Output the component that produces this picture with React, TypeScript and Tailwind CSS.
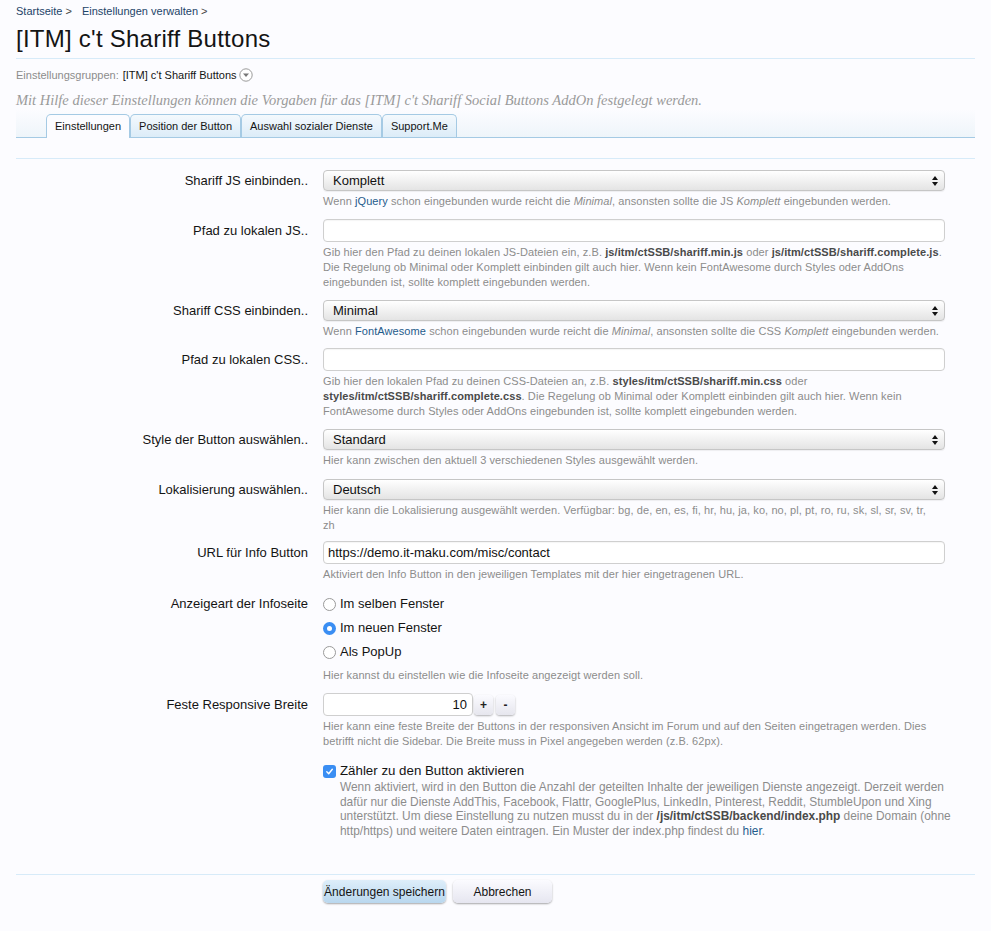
import React from "react";

const Arrows = () => (
  <svg width="8" height="12" viewBox="0 0 8 12" className="absolute right-[5px] top-1/2 -translate-y-1/2">
    <path d="M4 1 L7 5 L1 5 Z" fill="#111" />
    <path d="M4 11 L7 7 L1 7 Z" fill="#111" />
  </svg>
);

const Select = ({ value }: { value: string }) => (
  <div className="relative h-[21px] rounded-[4px] border border-[#c6c6c6] bg-gradient-to-b from-[#ffffff] to-[#e4e4e4] pl-[9px] text-[13px] leading-[19px] text-[#111] shadow-[0_1px_1px_rgba(0,0,0,0.06)]">
    {value}
    <Arrows />
  </div>
);

const Input = ({ value }: { value?: string }) => (
  <div className="h-[23px] rounded-[4px] border border-[#cfcfcf] bg-white px-[4px] text-[13px] leading-[21px] text-[#111] shadow-[inset_0_1px_1px_rgba(0,0,0,0.04)]">
    {value}
  </div>
);

const Hint = ({ children, className = "mt-[3px] text-[11px] leading-[15px] tracking-[0.08px]" }: { children: React.ReactNode; className?: string }) => (
  <div className={"text-[#8c8c8c] " + className}>{children}</div>
);

const B = ({ children }: { children: React.ReactNode }) => (
  <span className="font-bold text-[#4a4a4a]">{children}</span>
);
const A = ({ children }: { children: React.ReactNode }) => (
  <span className="text-[#1f5b8c]">{children}</span>
);

const Row = ({ label, children, labelH = 22, mb = 10 }: { label?: string; children: React.ReactNode; labelH?: number; mb?: number }) => (
  <div className="flex" style={{ marginBottom: `${mb}px` }}>
    <div
      className="w-[292px] shrink-0 text-right text-[13px] text-[#141414]"
      style={{ lineHeight: `${labelH}px` }}
    >
      {label}
    </div>
    <div className="ml-[15px] mr-[30px] flex-1">{children}</div>
  </div>
);

const Radio = ({ checked, label }: { checked?: boolean; label: string }) => (
  <div className="flex h-[24px] items-center">
    {checked ? (
      <span className="flex h-[13px] w-[13px] items-center justify-center rounded-full bg-[#3a8ef3]">
        <span className="h-[5px] w-[5px] rounded-full bg-white" />
      </span>
    ) : (
      <span className="h-[13px] w-[13px] rounded-full border border-[#9a9a9a] bg-white" />
    )}
    <span className="ml-[4px] text-[13px] text-[#141414]">{label}</span>
  </div>
);

const Tab = ({ label, active }: { label: string; active?: boolean }) => (
  <div
    className={
      active
        ? "relative -mb-px flex h-[24px] items-center rounded-t-[5px] border border-b-0 border-[#a5cae4] bg-[#fcfcff] px-[8px] text-[11px] text-[#141414]"
        : "flex h-[23px] items-center rounded-t-[5px] border border-b-0 border-[#a5cae4] bg-gradient-to-b from-[#f4f9fd] to-[#dcecf8] px-[8px] text-[11px] text-[#141414]"
    }
  >
    {label}
  </div>
);

export default function App() {
  return (
    <div className="min-h-[931px] bg-[#fcfcff] font-['Liberation_Sans',Arial,sans-serif]">
      <div className="px-4">
        <div className="h-[22px] text-[11px] leading-[22px] text-[#1d4468]">
          <span>Startseite</span>
          <span className="ml-[3px] text-[#444]">&gt;</span>
          <span className="ml-[10px]">Einstellungen verwalten</span>
          <span className="ml-[3px] text-[#444]">&gt;</span>
        </div>
        <div className="h-[37px] border-b border-[#d7ebf9] text-[24px] leading-[34px] tracking-[0.25px] text-[#141414]">
          [ITM] c't Shariff Buttons
        </div>
        <div className="mt-[8px] flex items-center text-[11px] leading-[16px]">
          <span className="text-[#8c8c8c]">Einstellungsgruppen:</span>
          <span className="ml-[4px] text-[#141414]">[ITM] c't Shariff Buttons</span>
          <svg width="14" height="14" viewBox="0 0 14 14" className="ml-[2px]">
            <circle cx="7" cy="7" r="6.2" fill="#fff" stroke="#9a9a9a" strokeWidth="1" />
            <path d="M4 5.5 L10 5.5 L7 9 Z" fill="#777" />
          </svg>
        </div>
        <div className="mt-[8px] font-['Liberation_Serif',serif] text-[14.5px] italic leading-[18px] text-[#9a9a9a]">
          Mit Hilfe dieser Einstellungen können die Vorgaben für das [ITM] c't Shariff Social Buttons AddOn festgelegt werden.
        </div>
        <div className="flex h-[29px] items-end border-b border-[#a5cae4] bg-gradient-to-b from-[#fcfcff] to-[#eef5fa] pl-[30px]">
          <Tab label="Einstellungen" active />
          <Tab label="Position der Button" />
          <Tab label="Auswahl sozialer Dienste" />
          <Tab label="Support.Me" />
        </div>
        <div className="mt-[20px] border-t border-[#d7ebf9] pt-[11px]">
          <Row label="Shariff JS einbinden.." labelH={21}>
            <Select value="Komplett" />
            <Hint>
              Wenn <A>jQuery</A> schon eingebunden wurde reicht die <i>Minimal</i>, ansonsten sollte die JS <i>Komplett</i> eingebunden werden.
            </Hint>
          </Row>
          <Row label="Pfad zu lokalen JS.." labelH={23}>
            <Input />
            <Hint>
              Gib hier den Pfad zu deinen lokalen JS-Dateien ein, z.B. <B>js/itm/ctSSB/shariff.min.js</B> oder <B>js/itm/ctSSB/shariff.complete.js</B>.
              <br />
              Die Regelung ob Minimal oder Komplett einbinden gilt auch hier. Wenn kein FontAwesome durch Styles oder AddOns
              <br />
              eingebunden ist, sollte komplett eingebunden werden.
            </Hint>
          </Row>
          <Row label="Shariff CSS einbinden.." labelH={21} mb={9}>
            <Select value="Minimal" />
            <Hint>
              Wenn <A>FontAwesome</A> schon eingebunden wurde reicht die <i>Minimal</i>, ansonsten sollte die CSS <i>Komplett</i> eingebunden werden.
            </Hint>
          </Row>
          <Row label="Pfad zu lokalen CSS.." labelH={23}>
            <Input />
            <Hint>
              Gib hier den lokalen Pfad zu deinen CSS-Dateien an, z.B. <B>styles/itm/ctSSB/shariff.min.css</B> oder
              <br />
              <B>styles/itm/ctSSB/shariff.complete.css</B>. Die Regelung ob Minimal oder Komplett einbinden gilt auch hier. Wenn kein
              <br />
              FontAwesome durch Styles oder AddOns eingebunden ist, sollte komplett eingebunden werden.
            </Hint>
          </Row>
          <Row label="Style der Button auswählen.." labelH={21} mb={11}>
            <Select value="Standard" />
            <Hint>Hier kann zwischen den aktuell 3 verschiedenen Styles ausgewählt werden.</Hint>
          </Row>
          <Row label="Lokalisierung auswählen.." labelH={21} mb={8}>
            <Select value="Deutsch" />
            <Hint>
              Hier kann die Lokalisierung ausgewählt werden. Verfügbar: bg, de, en, es, fi, hr, hu, ja, ko, no, pl, pt, ro, ru, sk, sl, sr, sv, tr,
              <br />
              zh
            </Hint>
          </Row>
          <Row label="URL für Info Button" labelH={23} mb={10}>
            <Input value="https://demo.it-maku.com/misc/contact" />
            <Hint>Aktiviert den Info Button in den jeweiligen Templates mit der hier eingetragenen URL.</Hint>
          </Row>
          <Row label="Anzeigeart der Infoseite" labelH={24} mb={10}>
            <Radio label="Im selben Fenster" />
            <Radio label="Im neuen Fenster" checked />
            <Radio label="Als PopUp" />
            <Hint className="mt-[4px] text-[11px] leading-[15px] tracking-[0.08px]">
              Hier kannst du einstellen wie die Infoseite angezeigt werden soll.
            </Hint>
          </Row>
          <Row label="Feste Responsive Breite" labelH={23}>
            <div className="flex items-center">
              <div className="h-[23px] w-[150px] rounded-[4px] border border-[#cfcfcf] bg-white px-[5px] text-right text-[13px] leading-[21px] text-[#111]">
                10
              </div>
              <div className="ml-[1px] flex h-[20px] w-[19px] items-center justify-center rounded-[4px] bg-gradient-to-b from-[#fbfbff] to-[#e6e6ee] text-[12px] font-bold text-[#222] shadow-[0_1px_2px_rgba(0,0,0,0.3)]">
                +
              </div>
              <div className="ml-[3px] flex h-[20px] w-[19px] items-center justify-center rounded-[4px] bg-gradient-to-b from-[#fbfbff] to-[#e6e6ee] text-[12px] font-bold text-[#222] shadow-[0_1px_2px_rgba(0,0,0,0.3)]">
                -
              </div>
            </div>
            <Hint>
              Hier kann eine feste Breite der Buttons in der responsiven Ansicht im Forum und auf den Seiten eingetragen werden. Dies
              <br />
              betrifft nicht die Sidebar. Die Breite muss in Pixel angegeben werden (z.B. 62px).
            </Hint>
          </Row>
          <Row label="" mb={0}>
            <div className="mt-[3px] flex h-[18px] items-center">
              <span className="flex h-[13px] w-[13px] items-center justify-center rounded-[3px] bg-[#3a8ef3]">
                <svg width="9" height="9" viewBox="0 0 9 9">
                  <path d="M1.8 4.8 L3.7 6.7 L7.3 2.3" fill="none" stroke="#fff" strokeWidth="1.4" strokeLinecap="round" strokeLinejoin="round" />
                </svg>
              </span>
              <span className="ml-[4px] text-[13.3px] text-[#141414]">Zähler zu den Button aktivieren</span>
            </div>
            <div className="ml-[17px]">
              <Hint className="whitespace-nowrap text-[11.9px] leading-[14.5px]">
                Wenn aktiviert, wird in den Button die Anzahl der geteilten Inhalte der jeweiligen Dienste angezeigt. Derzeit werden
                <br />
                dafür nur die Dienste AddThis, Facebook, Flattr, GooglePlus, LinkedIn, Pinterest, Reddit, StumbleUpon und Xing
                <br />
                unterstützt. Um diese Einstellung zu nutzen musst du in der <B>/js/itm/ctSSB/backend/index.php</B> deine Domain (ohne
                <br />
                http/https) und weitere Daten eintragen. Ein Muster der index.php findest du <A>hier</A>.
              </Hint>
            </div>
          </Row>
        </div>
        <div className="mt-[36px] border-t border-[#d7ebf9] pt-[5px]">
          <div className="ml-[307px] flex gap-[7px]">
            <div className="flex h-[23px] w-[123px] items-center justify-center rounded-[5px] bg-gradient-to-b from-[#deeefa] to-[#b9d7ee] text-[12px] text-[#141414] shadow-[0_1px_2px_rgba(0,0,0,0.35)]">
              Änderungen speichern
            </div>
            <div className="flex h-[23px] w-[99px] items-center justify-center rounded-[5px] bg-gradient-to-b from-[#fbfbff] to-[#e6e6f0] text-[12px] text-[#141414] shadow-[0_1px_2px_rgba(0,0,0,0.35)]">
              Abbrechen
            </div>
          </div>
        </div>
      </div>
    </div>
  );
}
